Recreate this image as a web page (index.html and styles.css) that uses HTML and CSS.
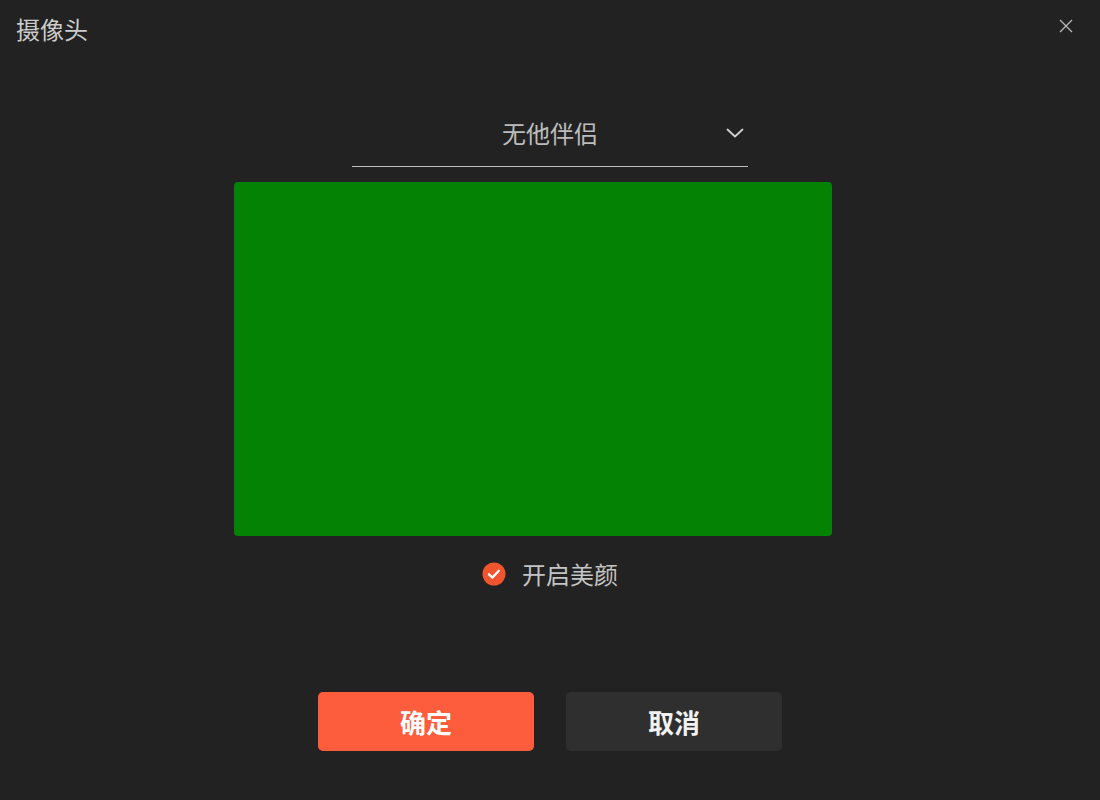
FILE: index.html
```html
<!DOCTYPE html>
<html lang="zh-CN">
<head>
<meta charset="utf-8">
<title>摄像头</title>
<link rel="stylesheet" href="styles.css">
</head>
<body>
<div class="dialog">
  <header class="header">
    <h1 class="title">摄像头</h1>
    <button class="close" aria-label="关闭">
      <svg width="14" height="14" viewBox="0 0 14 14"><path d="M1 1 L13 13 M13 1 L1 13" stroke="#b4b4b4" stroke-width="1.4" fill="none"/></svg>
    </button>
  </header>
  <main class="main">
    <div class="select">
      <span class="select-text">无他伴侣</span>
      <svg class="chevron" width="18" height="12" viewBox="0 0 18 12"><path d="M1.5 2.5 L9 9.5 L16.5 2.5" stroke="#d0d0d0" stroke-width="1.8" fill="none" stroke-linecap="round" stroke-linejoin="round"/></svg>
    </div>
    <div class="preview"></div>
    <label class="beauty">
      <span class="check">
        <svg width="24" height="24" viewBox="0 0 24 24"><circle cx="12" cy="12" r="11.5" fill="#f2552e"/><path d="M7 12.3 L10.4 15.6 L16.8 8.8" stroke="#fff" stroke-width="2.3" fill="none" stroke-linecap="round" stroke-linejoin="round"/></svg>
      </span>
      <span class="beauty-text">开启美颜</span>
    </label>
    <div class="actions">
      <button class="btn btn-ok">确定</button>
      <button class="btn btn-cancel">取消</button>
    </div>
  </main>
</div>
</body>
</html>
```
FILE: styles.css
```css
html, body {
  margin: 0;
  padding: 0;
  background: #222222;
  width: 1100px;
  height: 800px;
  overflow: hidden;
  font-family: "Noto Sans CJK SC", "Noto Sans", sans-serif;
}
.dialog {
  display: flex;
  flex-direction: column;
  height: 800px;
}
.header {
  height: 60px;
  display: flex;
  justify-content: space-between;
  align-items: flex-start;
  padding: 0 0 0 16px;
}
.title {
  margin: 14px 0 0 0;
  font-size: 24px;
  line-height: 30px;
  font-weight: 400;
  color: #cccccc;
}
.close {
  background: none;
  border: 0;
  padding: 0;
  margin: 19px 27px 0 0;
  width: 14px;
  height: 14px;
  display: flex;
  cursor: pointer;
}
.main {
  display: flex;
  flex-direction: column;
  align-items: center;
}
.select {
  margin-top: 50px;
  width: 396px;
  height: 46px;
  padding-bottom: 10px;
  border-bottom: 1.5px solid #bdbdbd;
  display: flex;
  align-items: center;
  justify-content: center;
  position: relative;
}
.select-text {
  font-size: 24px;
  color: #bcbcbc;
  line-height: 30px;
}
.chevron {
  position: absolute;
  right: 4px;
  top: 17px;
}
.preview {
  margin-top: 15px;
  margin-right: 34px;
  width: 598px;
  height: 354px;
  background: #038203;
  border-radius: 4px;
}
.beauty {
  margin-top: 26px;
  height: 24px;
  display: flex;
  align-items: center;
  gap: 16px;
}
.check {
  display: flex;
  width: 24px;
  height: 24px;
}
.beauty-text {
  font-size: 24px;
  color: #c4c4c4;
  line-height: 30px;
}
.actions {
  margin-top: 106px;
  display: flex;
  gap: 32px;
}
.btn {
  width: 216px;
  height: 59px;
  border: 0;
  border-radius: 5px;
  font-family: "Noto Sans CJK SC", sans-serif;
  font-size: 26px;
  font-weight: 700;
  color: #ffffff;
  cursor: pointer;
}
.btn-ok {
  background: #fd5d3c;
}
.btn-cancel {
  background: #2f2f2f;
  color: #f2f2f2;
}
```
